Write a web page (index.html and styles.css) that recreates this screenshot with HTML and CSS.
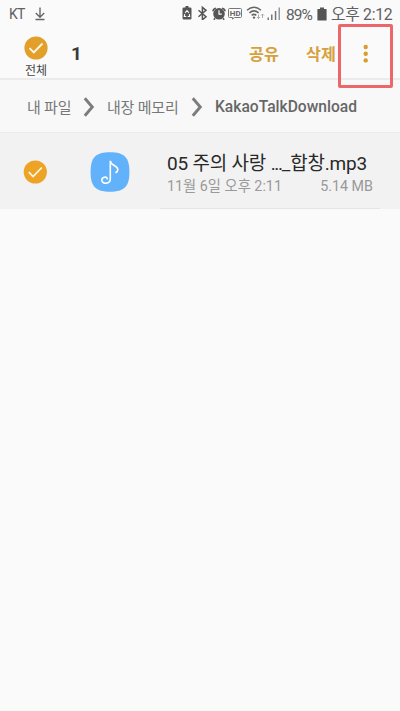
FILE: index.html
```html
<!DOCTYPE html>
<html lang="ko">
<head>
<meta charset="utf-8">
<title>내 파일</title>
<link rel="stylesheet" href="styles.css">
</head>
<body>
<div class="statusbar">
  <span class="carrier">KT</span>
  <svg class="download" width="12" height="14" viewBox="0 0 12 14"><path d="M6 .5v9.500M1.800 6l4.200 4.200L10.200 6M1.500 12.500h9" fill="none" stroke="#666" stroke-width="1.400"/></svg>
  <svg class="indicators" width="102" height="20" viewBox="0 0 102 20">
    <path d="M5 7.500h1.500V6h3v1.500H11q1.500 0 1.500 1.300v9.400q0 1.300-1.300 1.300H4.800q-1.300 0-1.300-1.300V8.800q0-1.300 1.500-1.300z" fill="#555"/>
    <path d="M6.100 12.800l1.900-2.300 1.900 2.300M5.700 14.200l-.4 2.300h2M10.300 14.200l.4 2.300h-2" fill="none" stroke="#fafafa" stroke-width="1.100"/>
    <path d="M19.500 10.300l7.500 6.500-3.600 3V7.300l3.600 3-7.500 6.500" fill="none" stroke="#555" stroke-width="1.500"/>
    <circle cx="40" cy="13.800" r="5.800" fill="#555"/>
    <path d="M34 11.200q.2-2.600 2.900-3M46 11.200q-.2-2.600-2.900-3M36 18.400l-1.200 1.300M44 18.400l1.200 1.300" fill="none" stroke="#555" stroke-width="1.600"/>
    <path d="M40 10.300v3.900h2.800" fill="none" stroke="#fafafa" stroke-width="1.200"/>
    <path d="M50.500 8.500h11q1 0 1 1v7q0 1-1 1h-6l-2 1.600v-1.600h-3q-1 0-1-1v-7q0-1 1-1z" fill="none" stroke="#777"/>
    <text x="50.800" y="16" class="hd">HD</text>
    <g fill="none" stroke="#666" stroke-width="1.500"><path d="M68 10.200q7-6 14 0M70.400 12.900q4.600-4 9.200 0M72.700 15.400q2.300-2 4.600 0"/></g>
    <circle cx="75" cy="17.600" r="1.200" fill="#666"/>
    <path d="M79.500 14.500v4m-1.500-1.500l1.500 1.500 1.500-1.500M83.500 18v-4m-1.500 1.500l1.500-1.500 1.500 1.500" fill="none" stroke="#999" stroke-width=".8"/>
    <g fill="#777"><path d="M88.500 17.500H90V20h-1.500zM92 14.500h1.500V20H92zM95.800 11h1.500v9h-1.500z"/><path d="M99.500 7.500h1.500V20h-1.500z" fill="#999"/></g>
  </svg>
  <span class="percent">89%</span>
  <svg class="battery" width="10" height="14" viewBox="0 0 10 14"><path d="M1 2h2V.5h4V2h2q.6 0 .6.600v10.400q0 .6-.6.600H1q-.6 0-.6-.6V2.600Q.4 2 1 2z" fill="#555"/></svg>
  <span class="clock">오후 2:12</span>
</div>

<header class="toolbar">
  <div class="select-all">
    <svg width="24" height="24" viewBox="0 0 24 24"><circle cx="12" cy="12" r="11.600" fill="#e2a02b"/><path d="M5.500 12.200l4.300 4.300L18.500 7.500" fill="none" stroke="#fff8e8" stroke-width="1.800"/></svg>
    <span class="all-label">전체</span>
  </div>
  <span class="count">1</span>
  <span class="action share">공유</span>
  <span class="action delete">삭제</span>
  <div class="more">
    <svg width="6" height="20" viewBox="0 0 6 20"><g fill="#d99d2b"><circle cx="2.700" cy="3" r="2.200"/><circle cx="2.700" cy="9.700" r="2.200"/><circle cx="2.700" cy="16.400" r="2.200"/></g></svg>
    <div class="highlight"></div>
  </div>
</header>

<nav class="breadcrumbs">
  <span class="crumb home">내 파일</span>
  <svg class="chevron" width="12" height="20" viewBox="0 0 12 20"><path d="M1.800 1.200l7.500 8.800-7.500 8.800" fill="none" stroke="#7c7c7c" stroke-width="2.900"/></svg>
  <span class="crumb memory">내장 메모리</span>
  <svg class="chevron" width="12" height="20" viewBox="0 0 12 20"><path d="M1.800 1.200l7.500 8.800-7.500 8.800" fill="none" stroke="#7c7c7c" stroke-width="2.900"/></svg>
  <span class="crumb current">KakaoTalkDownload</span>
</nav>

<main>
  <div class="file">
    <svg class="check" width="24" height="24" viewBox="0 0 24 24"><circle cx="12.300" cy="12" r="11.600" fill="#eda426"/><path d="M5.800 12.200l4.300 4.300L18.800 7.500" fill="none" stroke="#fff8e8" stroke-width="1.700"/></svg>
    <svg class="music" width="40" height="40" viewBox="0 0 40 40"><path d="M20 .3C34.500.3 39.400 5.500 39.400 20S34.500 39.700 20 39.700.6 34.500.6 20 5.500.3 20 .3z" fill="#62b2fb"/><path d="M20.300 27V8.800C20.300 13.500 27.800 13.500 27.800 17.500Q27.800 19.300 26 20.500M20.300 27c0 5.300-8.500 5.500-8.500 1 0-3 4.700-4 5.500-1.300" fill="none" stroke="#fff" stroke-width="1.600" stroke-linecap="round"/></svg>
    <div class="info">
      <div class="name">05 주의 사랑 <span class="dots">...</span>_합창.mp3</div>
      <div class="meta"><span class="date">11월 6일 오후 2:11</span><span class="size">5.14 MB</span></div>
    </div>
  </div>
</main>
</body>
</html>
```

FILE: styles.css
```css
* { box-sizing: border-box; }
body {
  margin: 0;
  min-height: 711px;
  background: #fafafa;
  color: #555;
  font-family: Roboto, "Noto Sans CJK KR", sans-serif;
  white-space: nowrap;
}
svg { display: block; flex: none; }
span { flex: none; }
.statusbar {
  height: 28px;
  display: flex;
  align-items: center;
  font-size: 15.500px;
  line-height: 28px;
  color: #606060;
}
.carrier { width: 25px; margin-left: 9px; font-size: 14px; letter-spacing: -0.7px; }
.indicators { margin-left: 133px; align-self: flex-start; }
.hd { font: bold 8px Roboto, sans-serif; fill: #666; }
.percent { margin-left: 5px; padding-top: 1px; width: 31px; letter-spacing: -1px; }
.clock { margin-left: 4px; padding-top: 1px; font-size: 15.800px; letter-spacing: -0.3px; }
.toolbar {
  height: 52px;
  display: flex;
  border-bottom: 2px solid #ebebeb;
}
.select-all {
  width: 30px;
  margin: 8px 0 0 21px;
  display: flex;
  flex-direction: column;
  align-items: center;
}
.all-label { font-size: 12px; line-height: 18px; margin-top: 2px; color: #444; }
.count {
  width: 20px;
  margin-left: 20px;
  font-size: 19px;
  font-weight: 700;
  line-height: 52px;
  color: #3a3a3a;
}
.action {
  font-size: 16.200px;
  font-weight: 700;
  line-height: 54px;
  color: #d6a03d;
}
.share { width: 57px; margin-left: 158px; }
.delete { width: 32px; }
.more {
  position: relative;
  width: 55px;
  height: 64px;
  flex: none;
  display: flex;
  justify-content: center;
  padding-top: 16px;
}
.highlight {
  position: absolute;
  inset: -4px 0 4px;
  border: 3px solid #ed666a;
  border-radius: 2px;
}
.breadcrumbs {
  height: 53px;
  padding: 1px 0 0 27px;
  display: flex;
  align-items: center;
  background: #f8f8f8;
  border-bottom: 1px solid #ededed;
  font-size: 15px;
  color: #777;
}
.home { width: 56px; }
.memory { width: 84px; margin-left: 12px; }
.memory, .home { letter-spacing: -0.2px; }
.current {
  margin-left: 12px;
  padding-top: 1px;
  font-size: 15.600px;
  font-weight: 500;
  color: #666;
}
.file {
  height: 76px;
  display: flex;
  background: #f2f2f2;
}
.check { margin: 27px 0 0 23px; }
.music { margin: 19px 0 0 43px; }
.info {
  width: 220px;
  height: 76px;
  margin-left: 30px;
  padding: 18px 7px 0;
  border-bottom: 1px solid #e4e4e4;
}
.name { font-size: 19px; line-height: 26px; letter-spacing: -0.200px; color: #292929; }
.dots { letter-spacing: -1.300px; }
.meta {
  display: flex;
  justify-content: space-between;
  font-size: 14.300px;
  line-height: 18px;
  color: #999;
}
```
